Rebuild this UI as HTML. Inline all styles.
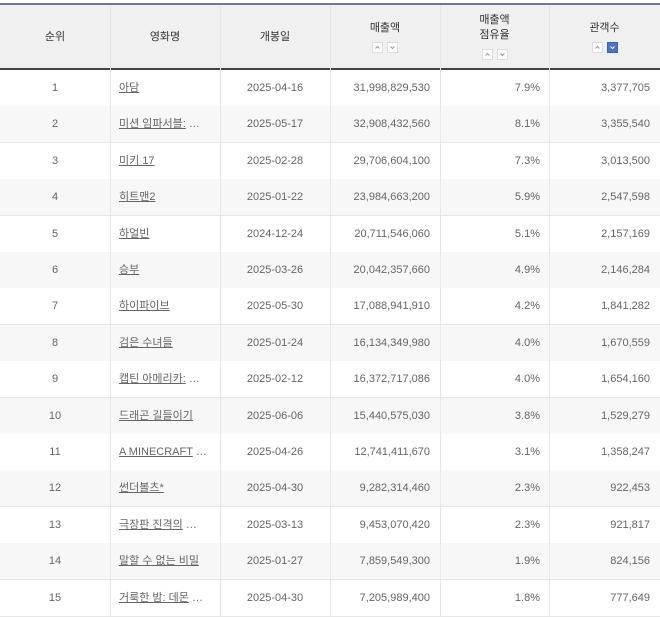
<!DOCTYPE html>
<html><head><meta charset="utf-8"><style>
body{margin:0;width:660px;height:617px;overflow:hidden;background:#fff;font-family:"Liberation Sans","Noto Sans CJK KR",sans-serif;}
.top{position:absolute;left:0;top:3px;width:660px;height:2px;background:#6b7a94;}
.hd{position:absolute;left:0;top:5px;width:660px;height:63px;background:#f0f0f0;}
.hb{position:absolute;left:0;top:68px;width:660px;height:2px;background:#444;}
.c{position:absolute;font-size:11px;color:#666;line-height:14px;height:14px;white-space:nowrap;}
.c span{line-height:14px;}
.h{position:absolute;font-size:11px;color:#333;text-align:center;line-height:15px;}
.vl{position:absolute;width:1px;background:#e6e6e6;}
.row{position:absolute;left:0;width:660px;height:36px;border-bottom:1px solid #e6e6e6;}
.n{text-decoration:underline;color:#666;}
.btn{display:inline-block;width:9px;height:9px;border:1px solid #ddd;background:#fff;margin:0 2px;vertical-align:middle;position:relative;}
.btn svg{position:absolute;left:1px;top:1px;}
.btn.on{background:#4a72c8;border-color:#3a60b0;}
</style></head><body>
<div class="top"></div><div class="hd"></div><div class="hb"></div>
<div class="h" style="left:0;width:110px;top:30px">순위</div>
<div class="h" style="left:110px;width:110px;top:30px">영화명</div>
<div class="h" style="left:220px;width:110px;top:30px">개봉일</div>
<div class="h" style="left:330px;width:110px;top:21px">매출액<br><span style="display:inline-block;margin-top:4px"><span class="btn"><svg width="7" height="7"><path d="M1.5 4.5L3.5 2.5L5.5 4.5" stroke="#999" fill="none"/></svg></span><span class="btn"><svg width="7" height="7"><path d="M1.5 2.5L3.5 4.5L5.5 2.5" stroke="#999" fill="none"/></svg></span></span></div>
<div class="h" style="left:440px;width:109px;top:13px">매출액<br>점유율<br><span style="display:inline-block;margin-top:4px"><span class="btn"><svg width="7" height="7"><path d="M1.5 4.5L3.5 2.5L5.5 4.5" stroke="#999" fill="none"/></svg></span><span class="btn"><svg width="7" height="7"><path d="M1.5 2.5L3.5 4.5L5.5 2.5" stroke="#999" fill="none"/></svg></span></span></div>
<div class="h" style="left:549px;width:111px;top:21px">관객수<br><span style="display:inline-block;margin-top:4px"><span class="btn"><svg width="7" height="7"><path d="M1.5 4.5L3.5 2.5L5.5 4.5" stroke="#999" fill="none"/></svg></span><span class="btn on"><svg width="7" height="7"><path d="M1.5 2.5L3.5 4.5L5.5 2.5" stroke="#fff" fill="none"/></svg></span></span></div>
<div id="rows"></div>
<script>
var d=[["아담","2025-04-16","31,998,829,530","7.9%","3,377,705"],
["미션 임파서블: …","2025-05-17","32,908,432,560","8.1%","3,355,540"],
["미키 17","2025-02-28","29,706,604,100","7.3%","3,013,500"],
["히트맨2","2025-01-22","23,984,663,200","5.9%","2,547,598"],
["하얼빈","2024-12-24","20,711,546,060","5.1%","2,157,169"],
["승부","2025-03-26","20,042,357,660","4.9%","2,146,284"],
["하이파이브","2025-05-30","17,088,941,910","4.2%","1,841,282"],
["검은 수녀들","2025-01-24","16,134,349,980","4.0%","1,670,559"],
["캡틴 아메리카: …","2025-02-12","16,372,717,086","4.0%","1,654,160"],
["드래곤 길들이기","2025-06-06","15,440,575,030","3.8%","1,529,279"],
["A MINECRAFT …","2025-04-26","12,741,411,670","3.1%","1,358,247"],
["썬더볼츠*","2025-04-30","9,282,314,460","2.3%","922,453"],
["극장판 진격의 …","2025-03-13","9,453,070,420","2.3%","921,817"],
["말할 수 없는 비밀","2025-01-27","7,859,549,300","1.9%","824,156"],
["거룩한 밤: 데몬 …","2025-04-30","7,205,989,400","1.8%","777,649"]];
var h="";
for(var i=0;i<d.length;i++){var t=70+i*36.4;var r=d[i];
h+='<div class="row" style="top:'+t+'px;background:'+(i%2?'#f7f7f7':'#fff')+'"></div>';
var y=t+11;
h+='<div class="c" style="left:0;width:110px;text-align:center;top:'+y+'px">'+(i+1)+'</div>';
h+='<div class="c" style="left:119px;top:'+y+'px"><span class="n">'+r[0].replace(' …','')+'</span>'+(r[0].indexOf('…')>0?' …':'')+'</div>';
h+='<div class="c" style="left:220px;width:110px;text-align:center;top:'+y+'px">'+r[1]+'</div>';
h+='<div class="c" style="right:230px;top:'+y+'px">'+r[2]+'</div>';
h+='<div class="c" style="right:120px;top:'+y+'px">'+r[3]+'</div>';
h+='<div class="c" style="right:10px;top:'+y+'px">'+r[4]+'</div>';}
[110,220,330,440,549].forEach(function(x){h+='<div class="vl" style="left:'+x+'px;top:5px;height:612px"></div>';});
document.getElementById('rows').innerHTML=h;
</script>
</body></html>
